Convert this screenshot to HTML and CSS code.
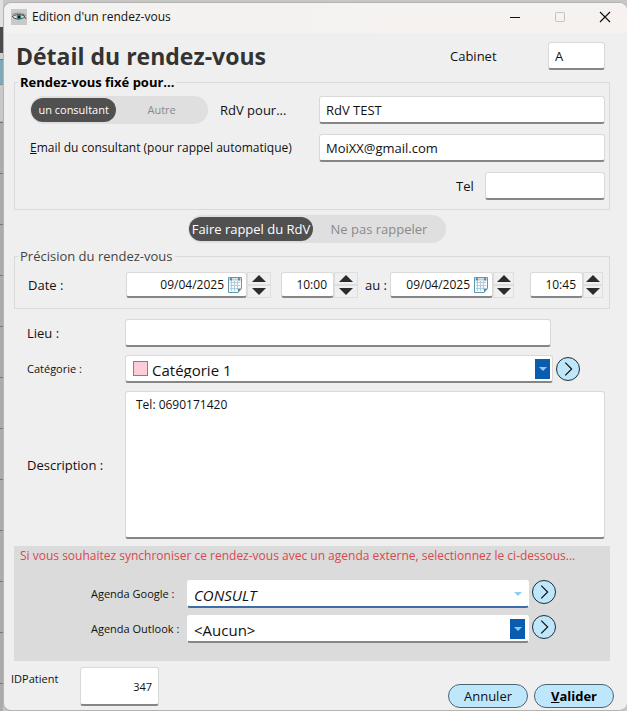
FILE: index.html
```html
<!DOCTYPE html>
<html lang="fr">
  <head>
    <meta charset="utf-8" />
    <title>Edition d'un rendez-vous</title>
    <link rel="stylesheet" href="styles.css">
  </head>

  <body>
    <!-- Edge of the window behind the dialog -->
    <div class="behind"></div>

    <main class="dialog">
      <header class="titlebar">
        <svg class="app-icon" viewBox="0 0 16 16">
          <rect width="16" height="16" fill="#c9c9c9"></rect>
          <path d="M1 6 C4 3.5 10 3.5 15 6.5" fill="none" stroke="#888" stroke-width="1"></path>
          <path d="M1 8 C4 5 11 4.5 14 8 C11 10 6 11 2 8.5" fill="#dfe5e4" stroke="#444" stroke-width="1"></path>
          <circle cx="8" cy="8" r="2.4" fill="#2f8580"></circle>
          <circle cx="8" cy="8" r="1.2" fill="#102020"></circle>
          <path d="M12 5 L15 10" stroke="#555" stroke-width="1"></path>
        </svg>
        <span class="window-title">Edition d'un rendez-vous</span>
        <button class="window-button" aria-label="Réduire">
          <svg viewBox="0 0 12 12"><path d="M1 6.5 H11" stroke="#111"></path></svg>
        </button>
        <button class="window-button" aria-label="Agrandir" disabled>
          <svg viewBox="0 0 12 12"><rect x="1.5" y="1.5" width="9" height="9" rx="1" fill="none" stroke="#c4c0c0"></rect></svg>
        </button>
        <button class="window-button" aria-label="Fermer">
          <svg viewBox="0 0 12 12"><path d="M1 1 L11 11 M11 1 L1 11" stroke="#111" stroke-width="1.2"></path></svg>
        </button>
      </header>

      <form class="content">
        <div class="heading">
          <h1>Détail du rendez-vous</h1>
          <label for="cabinet">Cabinet</label>
          <input class="field" id="cabinet" type="text" value="A">
        </div>

        <fieldset class="group person">
          <legend class="strong">Rendez-vous fixé pour...</legend>
          <div class="person-row">
            <div class="person-type">
              <div class="toggle small">
                <label><input type="radio" name="type" checked><span>un consultant</span></label>
                <label><input type="radio" name="type"><span>Autre</span></label>
              </div>
              <label for="rdv">RdV pour...</label>
            </div>
            <input class="field" id="rdv" type="text" value="RdV TEST">
          </div>
          <div class="person-row">
            <label class="long" for="email"><u>E</u>mail du consultant (pour rappel automatique)</label>
            <input class="field" id="email" type="text" value="MoiXX@gmail.com">
          </div>
          <div class="tel-row">
            <label for="tel">Tel</label>
            <input class="field" id="tel" type="text">
          </div>
        </fieldset>

        <div class="toggle reminder">
          <label><input type="radio" name="rappel" checked><span>Faire rappel du RdV</span></label>
          <label><input type="radio" name="rappel"><span>Ne pas rappeler</span></label>
        </div>

        <fieldset class="group">
          <legend>Précision du rendez-vous</legend>
          <div class="dates">
            <label class="date-label" for="date-start">Date :</label>
            <div class="stepper day first">
              <div class="field picker">
                <input id="date-start" type="text" value="09/04/2025">
                <button type="button" class="calendar" aria-label="Calendrier">
                  <svg viewBox="0 0 14 17"><use href="#calendar"></use></svg>
                </button>
              </div>
              <div class="arrows">
                <button type="button" aria-label="Jour suivant"><svg viewBox="0 0 14 7"><path d="M0 7 L7 0 L14 7 Z"></path></svg></button>
                <button type="button" aria-label="Jour précédent"><svg viewBox="0 0 14 7"><path d="M0 0 L7 7 L14 0 Z"></path></svg></button>
              </div>
            </div>
            <div class="stepper">
              <input class="field time" type="text" value="10:00" aria-label="Heure de début">
              <div class="arrows">
                <button type="button" aria-label="Plus tard"><svg viewBox="0 0 14 7"><path d="M0 7 L7 0 L14 7 Z"></path></svg></button>
                <button type="button" aria-label="Plus tôt"><svg viewBox="0 0 14 7"><path d="M0 0 L7 7 L14 0 Z"></path></svg></button>
              </div>
            </div>
            <label class="to-label" for="date-end">au :</label>
            <div class="stepper day">
              <div class="field picker">
                <input id="date-end" type="text" value="09/04/2025">
                <button type="button" class="calendar" aria-label="Calendrier">
                  <svg viewBox="0 0 14 17"><use href="#calendar"></use></svg>
                </button>
              </div>
              <div class="arrows">
                <button type="button" aria-label="Jour suivant"><svg viewBox="0 0 14 7"><path d="M0 7 L7 0 L14 7 Z"></path></svg></button>
                <button type="button" aria-label="Jour précédent"><svg viewBox="0 0 14 7"><path d="M0 0 L7 7 L14 0 Z"></path></svg></button>
              </div>
            </div>
            <div class="stepper last">
              <input class="field time" type="text" value="10:45" aria-label="Heure de fin">
              <div class="arrows">
                <button type="button" aria-label="Plus tard"><svg viewBox="0 0 14 7"><path d="M0 7 L7 0 L14 7 Z"></path></svg></button>
                <button type="button" aria-label="Plus tôt"><svg viewBox="0 0 14 7"><path d="M0 0 L7 7 L14 0 Z"></path></svg></button>
              </div>
            </div>
          </div>
        </fieldset>

        <div class="details">
          <label for="lieu">Lieu :</label>
          <input class="field place" id="lieu" type="text">

          <label class="compact" for="categorie">Catégorie :</label>
          <div class="choice">
            <div class="field combo">
              <span class="swatch"></span>
              <select id="categorie"><option>Catégorie 1</option></select>
              <span class="drop"><svg viewBox="0 0 8 4"><path d="M0 0 H8 L4 4 Z"></path></svg></span>
            </div>
            <button type="button" class="go" aria-label="Ouvrir les catégories">
              <svg viewBox="0 0 24 24"><path d="M9 5 L16 12 L9 19"></path></svg>
            </button>
          </div>

          <label for="description">Description :</label>
          <textarea class="field" id="description">Tel: 0690171420</textarea>
        </div>

        <section class="sync">
          <p class="long">Si vous souhaitez synchroniser ce rendez-vous avec un agenda externe, selectionnez le ci-dessous...</p>
          <div class="agendas">
            <label class="compact" for="google">Agenda Google :</label>
            <div class="choice">
              <div class="field combo active">
                <select id="google"><option>CONSULT</option></select>
                <span class="drop"><svg viewBox="0 0 8 4"><path d="M0 0 H8 L4 4 Z"></path></svg></span>
              </div>
              <button type="button" class="go" aria-label="Ouvrir l'agenda Google">
                <svg viewBox="0 0 24 24"><path d="M9 5 L16 12 L9 19"></path></svg>
              </button>
            </div>
            <label class="compact" for="outlook">Agenda Outlook :</label>
            <div class="choice">
              <div class="field combo">
                <select id="outlook"><option>&lt;Aucun&gt;</option></select>
                <span class="drop"><svg viewBox="0 0 8 4"><path d="M0 0 H8 L4 4 Z"></path></svg></span>
              </div>
              <button type="button" class="go" aria-label="Ouvrir l'agenda Outlook">
                <svg viewBox="0 0 24 24"><path d="M9 5 L16 12 L9 19"></path></svg>
              </button>
            </div>
          </div>
        </section>

        <footer class="actions">
          <label class="compact" for="patient">IDPatient</label>
          <input class="field" id="patient" type="text" value="347">
          <div class="buttons">
            <button type="button" class="pill">Annuler</button>
            <button type="submit" class="pill strong"><u>V</u>alider</button>
          </div>
        </footer>
      </form>
    </main>

    <!-- Shared calendar drawing -->
    <svg class="defs">
      <symbol id="calendar" viewBox="0 0 14 17">
        <path d="M0.5 1.5 H13.5 V12.5 L10 16.5 H0.5 Z" fill="#f4fafc" stroke="#5f97ad"></path>
        <path d="M1 3.5 H13" stroke="#b9cfda" stroke-width="2"></path>
        <path d="M2 6.5 H12 M2 9.5 H12 M2 12.5 H10 M3.5 5 V15 M6.5 5 V15 M9.5 5 V14" stroke="#a5c4d2" stroke-width="0.8"></path>
        <path d="M13.5 12.5 H10 V16.5 Z" fill="#5b8ca5"></path>
        <path d="M3 2 V4.5 M11 2 V4.5" stroke="#39566b" stroke-width="1.2"></path>
      </symbol>
    </svg>
  </body>
</html>
```

FILE: styles.css
```css
* {
  box-sizing: border-box;
}

body {
  display: grid;
  grid-template-columns: 3px minmax(0, 1fr);
  margin: 0;
  min-height: 100vh;
  background-color: #c6c6c6;
  font-family: "Open Sans", "Segoe UI", sans-serif;
  font-size: 13px;
  line-height: 16px;
  color: #111;
}

input,
select,
textarea,
button {
  margin: 0;
  padding: 0;
  border: none;
  background: none;
  font: inherit;
  color: inherit;
}

svg {
  display: block;
}

.defs {
  position: absolute;
  width: 0;
  height: 0;
}

.behind {
  background: linear-gradient(#e0e0e0 27px, #4a4a4a 27px, #4a4a4a 53px, #d0d0d0 53px, #d0d0d0 59px, #555 59px, #7fa9b8 60px, #7fa9b8 84px, #555 84px, #c8c8c8 85px, #c8c8c8 121px, transparent 121px),
    repeating-linear-gradient(#ababab 0 20px, #777 20px 21px, #ababab 21px 51px);
}

.dialog {
  margin-top: 2px;
  border: 1px solid #b5b2b2;
  border-right: none;
  border-radius: 8px;
  background-color: #efefef;
}

/* Title bar */
.titlebar {
  display: flex;
  align-items: center;
  height: 30px;
  padding: 0 0 2px 7px;
  border-radius: 8px 8px 0 0;
  background: linear-gradient(90deg, #f2f2f2, #f7f2f0);
}

.app-icon {
  width: 16px;
  height: 16px;
  margin-right: 5px;
}

.window-title {
  flex: 1;
  font-size: 12px;
}

.window-button {
  display: flex;
  align-items: center;
  justify-content: center;
  width: 45px;
  height: 28px;
}

.window-button svg {
  width: 12px;
  height: 12px;
}

.window-button path {
  fill: none;
}

.content {
  padding: 0 17px 0 10px;
}

.heading {
  display: grid;
  grid-template-columns: 1fr 98px 57px;
  align-items: center;
  padding: 9px 5px 4px 2px;
}

h1 {
  margin: 0;
  font-size: 23px;
  line-height: 28px;
  color: #333;
}

.strong {
  font-weight: bold;
  color: #000;
}

.long {
  font-size: 12px;
}

.compact {
  font-size: 11px;
}

/* Text boxes */
.field {
  width: 100%;
  min-width: 0;
  height: 28px;
  padding: 0 6px;
  border: 1px solid #d9d9d9;
  border-bottom: 2px solid #868686;
  border-radius: 3px;
  background-color: #fff;
}

.group {
  min-width: 0;
  margin: 0;
  padding: 6px 4px 8px 15px;
  border: 1px solid #dadada;
}

.group legend {
  margin-left: -12px;
  padding: 0 2px;
}

.group legend:not(.strong) {
  color: #444;
}

.person {
  display: grid;
  gap: 10px;
}

.group.person {
  padding-bottom: 9px;
}

.person-row {
  display: grid;
  grid-template-columns: 289fr 286fr;
  align-items: center;
}

.person-type {
  display: flex;
  align-items: center;
  gap: 12px;
}

.tel-row {
  display: grid;
  grid-template-columns: 29px 120px;
  justify-content: end;
  align-items: center;
}

/* Two-way switches */
.toggle {
  display: grid;
  grid-template-columns: 31fr 33fr;
  height: 28px;
  padding: 2px 1px;
  border-radius: 14px;
  background-color: #dfdfdf;
}

.toggle label {
  position: relative;
}

.toggle input {
  position: absolute;
  opacity: 0;
}

.toggle span {
  display: block;
  border-radius: 12px;
  line-height: 24px;
  text-align: center;
  color: #8a8a8a;
}

.toggle input:checked + span {
  background-color: #505050;
  color: #fff;
}

.toggle.small {
  width: 178px;
  font-size: 11px;
}

.toggle.reminder {
  width: 258px;
  margin: 5px 164px 5px auto;
}

/* Dates and times */
.dates {
  display: flex;
  align-items: center;
  margin-left: -2px;
  padding: 2px 2px 2px 0;
}

.date-label {
  width: 98px;
}

.stepper {
  display: grid;
  grid-template-columns: 53px 24px;
}

.stepper.day {
  grid-template-columns: 103px 21px;
}

.stepper.day.first {
  grid-template-columns: 121px 24px;
  margin-right: 10px;
}

.stepper.last {
  grid-template-columns: 53px 20px;
  margin-left: auto;
}

.stepper .field {
  height: 26px;
  font-size: 12px;
}

.picker {
  display: flex;
  align-items: center;
  gap: 4px;
  padding: 0 4px;
}

.picker input {
  flex: 1;
  min-width: 0;
  text-align: right;
}

.calendar svg {
  width: 14px;
  height: 17px;
}

.time {
  text-align: right;
}

.to-label {
  margin: 0 3px 0 7px;
}

.arrows {
  display: grid;
  grid-template-rows: 1fr 1fr;
}

.arrows button {
  display: flex;
  align-items: center;
  justify-content: center;
  border: 1px solid #dedede;
}

.arrows svg {
  width: 14px;
  height: 7px;
}

.arrows path {
  fill: #2b2b2b;
}

/* Place, category, description */
.details {
  display: grid;
  grid-template-columns: 98px 1fr;
  align-items: center;
  gap: 8px 0;
  padding: 10px 5px 7px 13px;
}

.field.place {
  width: calc(100% - 54px);
}

.choice {
  display: flex;
  align-items: center;
  gap: 3px;
}

.details .choice {
  padding-right: 25px;
}

.combo {
  display: flex;
  align-items: center;
  flex: 1;
  padding: 0 2px 0 7px;
}

.combo select {
  flex: 1;
  min-width: 0;
  height: 24px;
  padding-top: 3px;
  appearance: none;
  font-size: 15px;
}

.swatch {
  width: 15px;
  height: 15px;
  margin-right: 4px;
  border: 1px solid #8d7d82;
  background-color: #fcccd9;
}

.drop {
  display: flex;
  align-items: center;
  justify-content: center;
  width: 15px;
  height: 20px;
  background-color: #0a5cb0;
  pointer-events: none;
}

.drop svg {
  width: 8px;
  height: 4px;
}

.drop path {
  fill: #8fcaf5;
}

.combo.active {
  font-style: italic;
}

.active .drop {
  background: none;
}

.go {
  width: 24px;
  height: 24px;
  border: 1px solid #1f2f3a;
  border-radius: 50%;
  background-color: #bfe7fb;
}

.go svg {
  width: 22px;
  height: 22px;
}

.go path {
  fill: none;
  stroke: #111;
  stroke-width: 1.3;
}

#description {
  display: block;
  height: 148px;
  padding: 5px 10px;
  font-size: 12px;
  resize: none;
}

/* External agendas */
.sync {
  padding: 2px 0 18px 6px;
  background-color: #dbdbdb;
}

.sync p {
  margin: 0 0 16px;
  color: #d9484c;
}

.agendas {
  display: grid;
  grid-template-columns: 96px 1fr;
  align-items: center;
  gap: 7px 0;
  padding: 0 54px 0 71px;
}

.agendas .choice {
  align-items: flex-start;
}

.agendas .combo {
  padding: 0 3px 0 6px;
  border-color: #fff;
  border-bottom-color: #868686;
}

.agendas .combo.active {
  border-bottom-color: #3c6ea5;
}

.actions {
  display: grid;
  grid-template-columns: 69px 79px 1fr;
  margin: 0 -4px 0 -3px;
  padding: 6px 0 2px;
}

.actions .compact {
  padding-top: 4px;
}

#patient {
  height: 39px;
  font-size: 11px;
  text-align: right;
}

.buttons {
  display: flex;
  justify-content: flex-end;
  gap: 6px;
  padding-top: 17px;
}

.pill {
  width: 80px;
  height: 24px;
  border: 1px solid #4d6478;
  border-radius: 12px;
  background-color: #bfe7fb;
}
```
